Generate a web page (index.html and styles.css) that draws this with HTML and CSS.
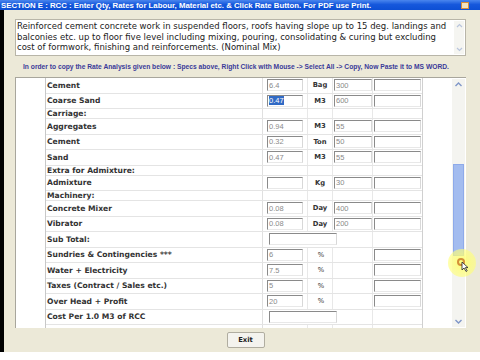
FILE: index.html
```html
<!DOCTYPE html>
<html lang="en">
<head>
  <meta charset="UTF-8">
  <title>Rate Analysis - RCC</title>
  <link rel="stylesheet" href="styles.css">
</head>
<body>
  <div class="titlebar">
    <span class="title">SECTION E : RCC : Enter Qty, Rates for Labour, Material etc. &amp; Click Rate Button. For PDF use Print.</span>
    <span class="title-btn"></span>
  </div>

  <div class="frame">
    <div class="desc">
      <div class="desc-text">
        Reinforced cement concrete work in suspended floors, roofs having slope up to 15 deg. landings and<br>
        balconies etc. up to floor five level including mixing, pouring, consolidating &amp; curing but excluding<br>
        cost of formwork, finishing and reinforcements. (Nominal Mix)
      </div>
      <div class="mini-scroll">
        <svg class="chev" width="7" height="5" viewBox="0 0 7 5"><path d="M1 4 L3.5 1.5 L6 4" fill="none" stroke="#b8c4dc" stroke-width="1.2"/></svg>
        <svg class="chev" width="7" height="5" viewBox="0 0 7 5"><path d="M1 1 L3.5 3.5 L6 1" fill="none" stroke="#b8c4dc" stroke-width="1.2"/></svg>
      </div>
    </div>

    <div class="hint">In order to copy the Rate Analysis given below : Specs above, Right Click with Mouse -&gt; Select All -&gt; Copy, Now Paste it to MS WORD.</div>

    <div class="panel">
      <div class="sheet">
        <div class="gutter"></div>
        <div class="grid">
          <div class="row">
            <div class="label">Cement</div>
            <div class="cell"><span class="box qty">6.4</span></div>
            <div class="cell unit">Bag</div>
            <div class="cell"><span class="box rate">300</span></div>
            <div class="cell"><span class="box amt"></span></div>
          </div>
          <div class="row">
            <div class="label">Coarse Sand</div>
            <div class="cell"><span class="box qty"><span class="sel">0.47</span></span></div>
            <div class="cell unit">M3</div>
            <div class="cell"><span class="box rate">600</span></div>
            <div class="cell"><span class="box amt"></span></div>
          </div>
          <div class="row head">
            <div class="label">Carriage:</div>
            <div class="cell"></div><div class="cell"></div><div class="cell"></div><div class="cell"></div>
          </div>
          <div class="row">
            <div class="label">Aggregates</div>
            <div class="cell"><span class="box qty">0.94</span></div>
            <div class="cell unit">M3</div>
            <div class="cell"><span class="box rate">55</span></div>
            <div class="cell"><span class="box amt"></span></div>
          </div>
          <div class="row">
            <div class="label">Cement</div>
            <div class="cell"><span class="box qty">0.32</span></div>
            <div class="cell unit">Ton</div>
            <div class="cell"><span class="box rate">50</span></div>
            <div class="cell"><span class="box amt"></span></div>
          </div>
          <div class="row">
            <div class="label">Sand</div>
            <div class="cell"><span class="box qty">0.47</span></div>
            <div class="cell unit">M3</div>
            <div class="cell"><span class="box rate">55</span></div>
            <div class="cell"><span class="box amt"></span></div>
          </div>
          <div class="row head">
            <div class="label">Extra for Admixture:</div>
            <div class="cell"></div><div class="cell"></div><div class="cell"></div><div class="cell"></div>
          </div>
          <div class="row">
            <div class="label">Admixture</div>
            <div class="cell"><span class="box qty"></span></div>
            <div class="cell unit">Kg</div>
            <div class="cell"><span class="box rate">30</span></div>
            <div class="cell"><span class="box amt"></span></div>
          </div>
          <div class="row head">
            <div class="label">Machinery:</div>
            <div class="cell"></div><div class="cell"></div><div class="cell"></div><div class="cell"></div>
          </div>
          <div class="row">
            <div class="label">Concrete Mixer</div>
            <div class="cell"><span class="box qty">0.08</span></div>
            <div class="cell unit">Day</div>
            <div class="cell"><span class="box rate">400</span></div>
            <div class="cell"><span class="box amt"></span></div>
          </div>
          <div class="row">
            <div class="label">Vibrator</div>
            <div class="cell"><span class="box qty">0.08</span></div>
            <div class="cell unit">Day</div>
            <div class="cell"><span class="box rate">200</span></div>
            <div class="cell"><span class="box amt"></span></div>
          </div>
          <div class="row">
            <div class="label">Sub Total:</div>
            <div class="cell span"><span class="box total"></span></div>
            <div class="cell"></div>
          </div>
          <div class="row">
            <div class="label">Sundries &amp; Contingencies ***</div>
            <div class="cell"><span class="box qty">6</span></div>
            <div class="cell unit pct">%</div>
            <div class="cell"></div>
            <div class="cell"><span class="box amt"></span></div>
          </div>
          <div class="row">
            <div class="label">Water + Electricity</div>
            <div class="cell"><span class="box qty">7.5</span></div>
            <div class="cell unit pct">%</div>
            <div class="cell"></div>
            <div class="cell"><span class="box amt"></span></div>
          </div>
          <div class="row">
            <div class="label">Taxes (Contract / Sales etc.)</div>
            <div class="cell"><span class="box qty">5</span></div>
            <div class="cell unit pct">%</div>
            <div class="cell"></div>
            <div class="cell"><span class="box amt"></span></div>
          </div>
          <div class="row">
            <div class="label">Over Head + Profit</div>
            <div class="cell"><span class="box qty">20</span></div>
            <div class="cell unit pct">%</div>
            <div class="cell"></div>
            <div class="cell"><span class="box amt"></span></div>
          </div>
          <div class="row">
            <div class="label">Cost Per 1.0 M3 of RCC</div>
            <div class="cell span"><span class="box total"></span></div>
            <div class="cell"></div>
          </div>
          <div class="row">
            <div class="label"></div>
            <div class="cell"></div><div class="cell"></div><div class="cell"></div><div class="cell"></div>
          </div>
        </div>
        <div class="pad"></div>
      </div>
      <div class="vscroll">
        <svg class="chev" width="9" height="7" viewBox="0 0 9 7"><path d="M1.5 5 L4.5 2 L7.5 5" fill="none" stroke="#7f96c8" stroke-width="1.4"/></svg>
        <div class="track"><div class="thumb"></div></div>
        <svg class="chev" width="9" height="7" viewBox="0 0 9 7"><path d="M1.5 2 L4.5 5 L7.5 2" fill="none" stroke="#7f96c8" stroke-width="1.4"/></svg>
      </div>
    </div>

    <div class="actions">
      <button class="exit">Exit</button>
    </div>
  </div>

  <div class="cursor-glow">
    <span class="ring"></span>
    <svg class="pointer" width="8" height="11" viewBox="0 0 8 11">
      <path d="M1 1 L1 9 L3 7 L5 10.5 L6.2 9.8 L4.3 6.6 L7 6.6 Z" fill="#fff" stroke="#222" stroke-width="0.8"/>
    </svg>
  </div>
</body>
</html>
```

FILE: styles.css
```css
* {
  box-sizing: border-box;
}
body {
  margin: 0;
  width: 480px;
  height: 360px;
  overflow: hidden;
  background-color: #fff;
  font-family: 'DejaVu Sans', Verdana, sans-serif;
  position: relative;
}

/* title bar */
.titlebar {
  height: 10px;
  display: flex;
  align-items: center;
  justify-content: space-between;
  padding: 0 11px 0 1px;
  background: linear-gradient(#4a86ee, #1658dc 45%, #0d4fd4);
}

.title {
  color: #fff;
  font-family: 'Liberation Sans', Arial, sans-serif;
  font-weight: 700;
  font-size: 7.8px;
  white-space: nowrap;
}

.title-btn {
  width: 8px;
  height: 7px;
  background: #f3e2c0;
  border: 1px solid #d88c3a;
}

/* main window body */
.frame {
  height: 342px;
  background-color: #ece9d8;
  border-left: 4px solid #000;
  padding: 9px 14px 0 11px;
  display: flex;
  flex-direction: column;
}

.desc {
  height: 37px;
  background: #fff;
  border: 1px solid #b8b5a8;
  display: flex;
}

.desc-text {
  flex: 1;
  font-size: 8.5px;
  line-height: 10.5px;
  color: #222;
  padding: 1px 0 0 1px;
  white-space: nowrap;
  overflow: hidden;
}

.mini-scroll {
  width: 10px;
  margin: 1px 1px 1px 0;
  background: #f5f5f1;
  display: flex;
  flex-direction: column;
  justify-content: space-between;
  align-items: center;
  padding: 2px 0;
}

.hint {
  height: 21px;
  display: flex;
  align-items: center;
  padding-left: 8px;
  font-family: 'Liberation Sans', Arial, sans-serif;
  font-weight: 700;
  font-size: 6.7px;
  color: #3a3a98;
  white-space: nowrap;
}

/* rate sheet */
.panel {
  height: 251px;
  display: flex;
  border-top: 1px solid #a8a69c;
  border-left: 1px solid #a8a69c;
  background: #fff;
}

.sheet {
  flex: 1;
  display: flex;
  overflow: hidden;
}

.gutter {
  width: 29px;
}

.grid {
  width: 378px;
  border-left: 1px solid #c8c8c8;
  border-right: 1px solid #d0d0d0;
}

.pad {
  flex: 1;
}

.row {
  display: grid;
  grid-template-columns: 217px 45px 25px 40px 50px;
  height: 15.5px;
  border-bottom: 1px solid #e4e4e4;
}

.row.head {
  height: 10px;
}

.label {
  display: flex;
  align-items: center;
  padding-left: 1px;
  font-weight: 700;
  font-size: 7.6px;
  color: #333;
  white-space: nowrap;
  border-right: 1px solid #e0e0e0;
}

.cell {
  display: flex;
  align-items: center;
  border-right: 1px solid #e8e8e8;
}

.cell:last-child {
  border-right: none;
}

.cell.span {
  grid-column: span 3;
}

.unit {
  justify-content: center;
  font-weight: 700;
  font-size: 6.8px;
  color: #333;
}

.unit.pct {
  font-weight: 400;
  padding-left: 2px;
}

.box {
  height: 12px;
  display: flex;
  align-items: center;
  padding-left: 1px;
  background: #fff;
  border-top: 1px solid #8a8a8a;
  border-left: 1px solid #8a8a8a;
  border-right: 1px solid #d8d8d8;
  border-bottom: 1px solid #e8e8e8;
  font-family: 'Liberation Sans', Arial, sans-serif;
  font-size: 7.5px;
  color: #8a8a8a;
}

.qty {
  width: 36px;
  margin-left: 4px;
}

.rate {
  width: 38px;
  margin-left: 1px;
}

.amt {
  width: 47px;
  margin-left: 1px;
}

.total {
  width: 68px;
  margin-left: 6px;
}

.sel {
  background: #316ac5;
  color: #fff;
}

.vscroll {
  width: 13px;
  margin: 1px 1px 1px 0;
  background: #f4f4f0;
  display: flex;
  flex-direction: column;
  align-items: center;
  padding: 2px 0;
}

.vscroll .track {
  flex: 1;
  width: 100%;
  padding-top: 76px;
}

.vscroll .thumb {
  height: 92px;
  margin: 0 1px;
  background: #a3bcef;
  border: 1px solid #8eaaea;
}

/* buttons */
.actions {
  display: flex;
  justify-content: center;
  padding: 4px 0 0 10px;
}

.exit {
  width: 38px;
  height: 16px;
  padding: 0;
  background: #f4f3ee;
  border: 1px solid #b0ada0;
  border-radius: 2px;
  font-family: 'DejaVu Sans', Verdana, sans-serif;
  font-weight: 700;
  font-size: 6.8px;
  color: #222;
}

/* screen recorder cursor highlight */
.cursor-glow {
  position: absolute;
  left: 448px;
  top: 249px;
  width: 28px;
  height: 28px;
  border-radius: 50%;
  background: radial-gradient(rgba(255, 255, 110, 0.9), rgba(255, 255, 120, 0.6) 70%, rgba(255, 255, 140, 0));
}

.ring {
  position: absolute;
  left: 9px;
  top: 9px;
  width: 8px;
  height: 8px;
  border-radius: 50%;
  border: 2px solid #d49038;
}

.pointer {
  position: absolute;
  left: 13px;
  top: 12px;
}
```
